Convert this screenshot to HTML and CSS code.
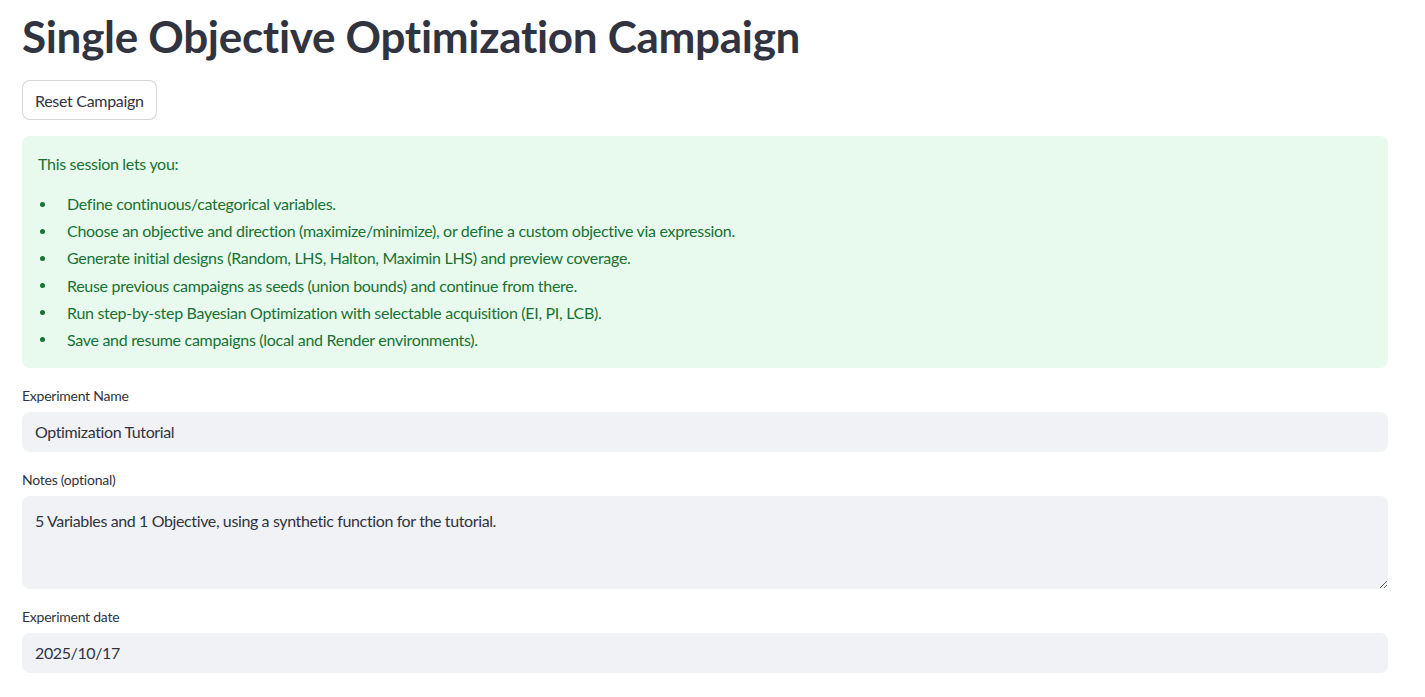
FILE: index.html
```html
<!DOCTYPE html>
<html lang="en">
<head>
<meta charset="utf-8">
<title>Single Objective Optimization Campaign</title>
<link rel="stylesheet" href="styles.css">
</head>
<body>
<main class="main">
  <h1 class="title">Single Objective Optimization Campaign</h1>
  <div class="row"><button class="btn" type="button">Reset Campaign</button></div>
  <div class="alert">
    <p class="alert-lead">This session lets you:</p>
    <ul class="alert-list">
      <li>Define continuous/categorical variables.</li>
      <li>Choose an objective and direction (maximize/minimize), or define a custom objective via expression.</li>
      <li>Generate initial designs (Random, LHS, Halton, Maximin LHS) and preview coverage.</li>
      <li>Reuse previous campaigns as seeds (union bounds) and continue from there.</li>
      <li>Run step-by-step Bayesian Optimization with selectable acquisition (EI, PI, LCB).</li>
      <li>Save and resume campaigns (local and Render environments).</li>
    </ul>
  </div>
  <div class="field">
    <label class="label" for="name">Experiment Name</label>
    <input class="input" id="name" type="text" value="Optimization Tutorial">
  </div>
  <div class="field">
    <label class="label" for="notes">Notes (optional)</label>
    <textarea class="input textarea" id="notes">5 Variables and 1 Objective, using a synthetic function for the tutorial.</textarea>
  </div>
  <div class="field">
    <label class="label" for="date">Experiment date</label>
    <input class="input" id="date" type="text" value="2025/10/17">
  </div>
</main>
</body>
</html>
```
FILE: styles.css
```css
html, body {
  margin: 0;
  padding: 0;
  background: #ffffff;
}
body {
  font-family: "Lato", "Noto Sans", sans-serif;
  color: #31333f;
  letter-spacing: -0.3px;
  overflow: hidden;
}
.main {
  display: flex;
  flex-direction: column;
  padding: 10px 37px 0 22px;
}
.title {
  margin: 0 0 17px;
  font-size: 44px;
  line-height: 53px;
  font-weight: 700;
  color: #31333f;
}
.row {
  display: flex;
  margin-bottom: 16px;
}
.btn {
  height: 40px;
  padding: 0 12px;
  font-family: inherit;
  font-size: 16px;
  letter-spacing: -0.3px;
  color: #31333f;
  background: #ffffff;
  border: 1px solid rgba(49, 51, 63, 0.2);
  border-radius: 8px;
}
.alert {
  background: #e8f9ee;
  border-radius: 8px;
  padding: 16px;
  color: #177233;
  font-size: 16px;
  line-height: 24px;
  margin-bottom: 16px;
}
.alert-lead {
  margin: 0 0 16px;
}
.alert-list {
  list-style: none;
  margin: 0;
  padding: 0;
}
.alert-list li {
  display: flex;
  align-items: center;
}
.alert-list li + li {
  margin-top: 3.2px;
}
.alert-list li::before {
  content: "";
  flex: none;
  width: 5px;
  height: 5px;
  border-radius: 50%;
  background: #177233;
  margin: 0 22px 0 2px;
}
.field {
  display: flex;
  flex-direction: column;
  margin-bottom: 16px;
}
.label {
  font-size: 14px;
  line-height: 24px;
  letter-spacing: -0.25px;
  margin-bottom: 4px;
  color: #31333f;
}
.input {
  box-sizing: border-box;
  height: 40px;
  padding: 0 13px;
  font-family: inherit;
  font-size: 16px;
  letter-spacing: -0.38px;
  color: #31333f;
  background: #f0f2f6;
  border: none;
  border-radius: 8px;
  outline: none;
}
.textarea {
  height: 93px;
  padding: 13px;
  line-height: 24px;
  resize: vertical;
}
```
